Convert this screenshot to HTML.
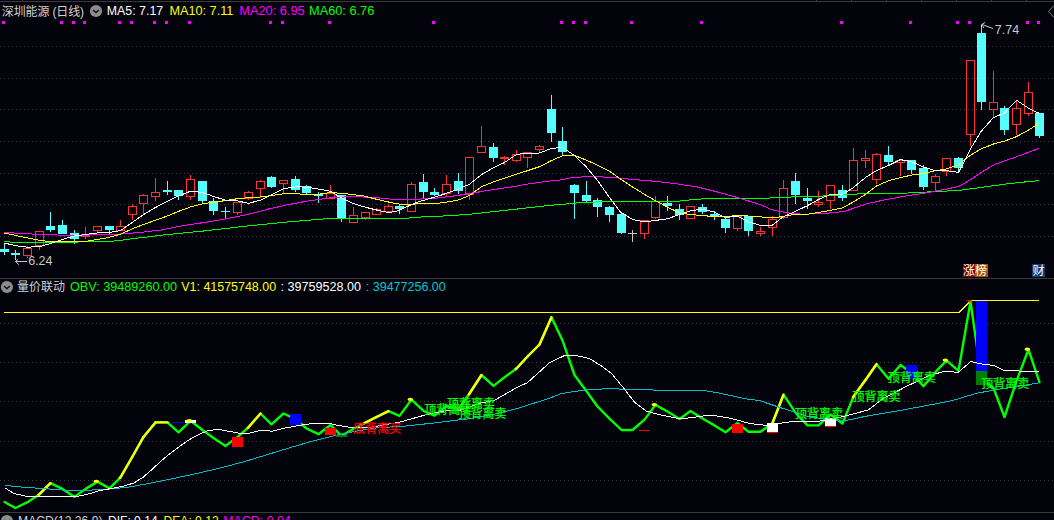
<!DOCTYPE html>
<html lang="zh-CN"><head><meta charset="utf-8"><title>深圳能源 (日线)</title>
<style>html,body{margin:0;padding:0;background:#03030b;overflow:hidden}svg{display:block}
text{font-family:"Liberation Sans","Noto Sans CJK SC",sans-serif;font-size:12px}
.lb{font-family:"Liberation Sans","Noto Sans CJK SC",sans-serif;font-size:12px}
.ce{shape-rendering:crispEdges}
</style></head><body>
<svg width="1054" height="520" viewBox="0 0 1054 520">
<rect width="1054" height="520" fill="#03030b"/>
<defs><pattern id="dots" x="0" y="0" width="4" height="1" patternUnits="userSpaceOnUse"><rect x="0" y="0" width="1" height="1" fill="#3c3c3c"/></pattern></defs>
<rect class="ce" x="0" y="46" width="1054" height="1" fill="url(#dots)"/>
<rect class="ce" x="0" y="78" width="1054" height="1" fill="url(#dots)"/>
<rect class="ce" x="0" y="109" width="1054" height="1" fill="url(#dots)"/>
<rect class="ce" x="0" y="141" width="1054" height="1" fill="url(#dots)"/>
<rect class="ce" x="0" y="173" width="1054" height="1" fill="url(#dots)"/>
<rect class="ce" x="0" y="204" width="1054" height="1" fill="url(#dots)"/>
<rect class="ce" x="0" y="236" width="1054" height="1" fill="url(#dots)"/>
<rect class="ce" x="0" y="323" width="1054" height="1" fill="url(#dots)"/>
<rect class="ce" x="0" y="362" width="1054" height="1" fill="url(#dots)"/>
<rect class="ce" x="0" y="401" width="1054" height="1" fill="url(#dots)"/>
<rect class="ce" x="0" y="441" width="1054" height="1" fill="url(#dots)"/>
<rect class="ce" x="0" y="480" width="1054" height="1" fill="url(#dots)"/>
<rect class="ce" x="0" y="1" width="1054" height="1" fill="#3a3a3a"/>
<rect class="ce" x="0" y="278" width="1054" height="1" fill="#3a3a3a"/>
<rect class="ce" x="0" y="512" width="1054" height="1" fill="#3a3a3a"/>
<rect class="ce" x="22" y="0" width="1" height="1" fill="#3a3a3a"/>
<rect class="ce" x="816" y="0" width="1" height="1" fill="#3a3a3a"/>
<rect class="ce" x="851" y="0" width="1" height="1" fill="#3a3a3a"/>
<rect class="ce" x="886" y="0" width="1" height="1" fill="#3a3a3a"/>
<rect class="ce" x="921" y="0" width="1" height="1" fill="#3a3a3a"/>
<rect class="ce" x="956" y="0" width="1" height="1" fill="#3a3a3a"/>
<rect class="ce" x="991" y="0" width="1" height="1" fill="#3a3a3a"/>
<rect class="ce" x="1026" y="0" width="1" height="1" fill="#3a3a3a"/>
<rect class="ce" x="2" y="21" width="3" height="3" fill="#ff00ff"/>
<rect class="ce" x="60" y="21" width="3" height="3" fill="#ff00ff"/>
<rect class="ce" x="72" y="21" width="3" height="3" fill="#ff00ff"/>
<rect class="ce" x="83" y="21" width="3" height="3" fill="#ff00ff"/>
<rect class="ce" x="118" y="21" width="3" height="3" fill="#ff00ff"/>
<rect class="ce" x="130" y="21" width="3" height="3" fill="#ff00ff"/>
<rect class="ce" x="153" y="21" width="3" height="3" fill="#ff00ff"/>
<rect class="ce" x="165" y="21" width="3" height="3" fill="#ff00ff"/>
<rect class="ce" x="188" y="21" width="3" height="3" fill="#ff00ff"/>
<rect class="ce" x="269" y="21" width="3" height="3" fill="#ff00ff"/>
<rect class="ce" x="281" y="21" width="3" height="3" fill="#ff00ff"/>
<rect class="ce" x="328" y="21" width="3" height="3" fill="#ff00ff"/>
<rect class="ce" x="432" y="21" width="3" height="3" fill="#ff00ff"/>
<rect class="ce" x="560" y="21" width="3" height="3" fill="#ff00ff"/>
<rect class="ce" x="572" y="21" width="3" height="3" fill="#ff00ff"/>
<rect class="ce" x="584" y="21" width="3" height="3" fill="#ff00ff"/>
<rect class="ce" x="630" y="21" width="3" height="3" fill="#ff00ff"/>
<rect class="ce" x="700" y="21" width="3" height="3" fill="#ff00ff"/>
<rect class="ce" x="840" y="21" width="3" height="3" fill="#ff00ff"/>
<rect class="ce" x="909" y="21" width="3" height="3" fill="#ff00ff"/>
<rect class="ce" x="956" y="21" width="3" height="3" fill="#ff00ff"/>
<rect class="ce" x="968" y="21" width="3" height="3" fill="#ff00ff"/>
<rect class="ce" x="1026" y="21" width="3" height="3" fill="#ff00ff"/>
<rect class="ce" x="1037" y="21" width="3" height="3" fill="#ff00ff"/>
<g class="ce">
<rect x="4" y="244" width="1" height="11" fill="#54ffff"/>
<rect x="0" y="249" width="9" height="3" fill="#54ffff"/>
<rect x="15" y="250" width="1" height="10" fill="#54ffff"/>
<rect x="11" y="253" width="9" height="2" fill="#54ffff"/>
<rect x="27" y="246" width="1" height="2" fill="#ff3232"/>
<rect x="27" y="256" width="1" height="2" fill="#ff3232"/>
<rect x="23.5" y="248.5" width="8" height="7" fill="none" stroke="#ff3232" stroke-width="1"/>
<rect x="39" y="246" width="1" height="4" fill="#ff3232"/>
<rect x="35.5" y="231.5" width="8" height="14" fill="none" stroke="#ff3232" stroke-width="1"/>
<rect x="50" y="212" width="1" height="20" fill="#54ffff"/>
<rect x="46" y="226" width="9" height="4" fill="#54ffff"/>
<rect x="62" y="220" width="1" height="14" fill="#54ffff"/>
<rect x="58" y="225" width="9" height="9" fill="#54ffff"/>
<rect x="74" y="230" width="1" height="14" fill="#54ffff"/>
<rect x="70" y="233" width="9" height="6" fill="#54ffff"/>
<rect x="85" y="227" width="1" height="7" fill="#ff3232"/>
<rect x="85" y="237" width="1" height="2" fill="#ff3232"/>
<rect x="81.5" y="234.5" width="8" height="2" fill="none" stroke="#ff3232" stroke-width="1"/>
<rect x="97" y="231" width="1" height="2" fill="#ff3232"/>
<rect x="93.5" y="226.5" width="8" height="4" fill="none" stroke="#ff3232" stroke-width="1"/>
<rect x="109" y="226" width="1" height="8" fill="#54ffff"/>
<rect x="105" y="226" width="9" height="4" fill="#54ffff"/>
<rect x="120" y="220" width="1" height="6" fill="#ff3232"/>
<rect x="116.5" y="226.5" width="8" height="4" fill="none" stroke="#ff3232" stroke-width="1"/>
<rect x="132" y="204" width="1" height="2" fill="#ff3232"/>
<rect x="132" y="215" width="1" height="5" fill="#ff3232"/>
<rect x="128.5" y="206.5" width="8" height="8" fill="none" stroke="#ff3232" stroke-width="1"/>
<rect x="143" y="194" width="1" height="1" fill="#ff3232"/>
<rect x="143" y="204" width="1" height="11" fill="#ff3232"/>
<rect x="139.5" y="195.5" width="8" height="8" fill="none" stroke="#ff3232" stroke-width="1"/>
<rect x="155" y="178" width="1" height="14" fill="#ff3232"/>
<rect x="155" y="197" width="1" height="4" fill="#ff3232"/>
<rect x="151.5" y="192.5" width="8" height="4" fill="none" stroke="#ff3232" stroke-width="1"/>
<rect x="167" y="181" width="1" height="14" fill="#54ffff"/>
<rect x="163" y="190" width="9" height="2" fill="#54ffff"/>
<rect x="178" y="190" width="1" height="10" fill="#54ffff"/>
<rect x="174" y="190" width="9" height="6" fill="#54ffff"/>
<rect x="190" y="175" width="1" height="4" fill="#ff3232"/>
<rect x="190" y="197" width="1" height="3" fill="#ff3232"/>
<rect x="186.5" y="179.5" width="8" height="17" fill="none" stroke="#ff3232" stroke-width="1"/>
<rect x="202" y="181" width="1" height="22" fill="#54ffff"/>
<rect x="198" y="181" width="9" height="20" fill="#54ffff"/>
<rect x="213" y="198" width="1" height="17" fill="#54ffff"/>
<rect x="209" y="201" width="9" height="10" fill="#54ffff"/>
<rect x="225" y="207" width="1" height="12" fill="#54ffff"/>
<rect x="221" y="211" width="9" height="1" fill="#54ffff"/>
<rect x="237" y="213" width="1" height="2" fill="#ff3232"/>
<rect x="233.5" y="202.5" width="8" height="10" fill="none" stroke="#ff3232" stroke-width="1"/>
<rect x="248" y="191" width="1" height="1" fill="#ff3232"/>
<rect x="248" y="199" width="1" height="1" fill="#ff3232"/>
<rect x="244.5" y="192.5" width="8" height="6" fill="none" stroke="#ff3232" stroke-width="1"/>
<rect x="260" y="180" width="1" height="1" fill="#ff3232"/>
<rect x="260" y="189" width="1" height="9" fill="#ff3232"/>
<rect x="256.5" y="181.5" width="8" height="7" fill="none" stroke="#ff3232" stroke-width="1"/>
<rect x="271" y="176" width="1" height="12" fill="#54ffff"/>
<rect x="267" y="177" width="9" height="10" fill="#54ffff"/>
<rect x="283" y="184" width="1" height="10" fill="#ff3232"/>
<rect x="279.5" y="180.5" width="8" height="3" fill="none" stroke="#ff3232" stroke-width="1"/>
<rect x="295" y="176" width="1" height="16" fill="#54ffff"/>
<rect x="291" y="179" width="9" height="11" fill="#54ffff"/>
<rect x="306" y="185" width="1" height="10" fill="#54ffff"/>
<rect x="302" y="186" width="9" height="7" fill="#54ffff"/>
<rect x="318" y="192" width="1" height="11" fill="#54ffff"/>
<rect x="314" y="194" width="9" height="2" fill="#54ffff"/>
<rect x="330" y="185" width="1" height="8" fill="#ff3232"/>
<rect x="326.5" y="193.5" width="8" height="5" fill="none" stroke="#ff3232" stroke-width="1"/>
<rect x="341" y="195" width="1" height="27" fill="#54ffff"/>
<rect x="337" y="195" width="9" height="23" fill="#54ffff"/>
<rect x="353" y="207" width="1" height="8" fill="#ff3232"/>
<rect x="349.5" y="215.5" width="8" height="7" fill="none" stroke="#ff3232" stroke-width="1"/>
<rect x="365" y="218" width="1" height="2" fill="#ff3232"/>
<rect x="361.5" y="212.5" width="8" height="5" fill="none" stroke="#ff3232" stroke-width="1"/>
<rect x="376" y="208" width="1" height="1" fill="#ff3232"/>
<rect x="372.5" y="209.5" width="8" height="5" fill="none" stroke="#ff3232" stroke-width="1"/>
<rect x="388" y="204" width="1" height="2" fill="#ff3232"/>
<rect x="384.5" y="206.5" width="8" height="5" fill="none" stroke="#ff3232" stroke-width="1"/>
<rect x="399" y="204" width="1" height="10" fill="#54ffff"/>
<rect x="395" y="206" width="9" height="3" fill="#54ffff"/>
<rect x="411" y="182" width="1" height="2" fill="#ff3232"/>
<rect x="407.5" y="184.5" width="8" height="27" fill="none" stroke="#ff3232" stroke-width="1"/>
<rect x="423" y="174" width="1" height="24" fill="#54ffff"/>
<rect x="419" y="182" width="9" height="10" fill="#54ffff"/>
<rect x="434" y="188" width="1" height="8" fill="#54ffff"/>
<rect x="430" y="192" width="9" height="3" fill="#54ffff"/>
<rect x="446" y="175" width="1" height="9" fill="#ff3232"/>
<rect x="446" y="194" width="1" height="3" fill="#ff3232"/>
<rect x="442.5" y="184.5" width="8" height="9" fill="none" stroke="#ff3232" stroke-width="1"/>
<rect x="458" y="173" width="1" height="21" fill="#54ffff"/>
<rect x="454" y="181" width="9" height="10" fill="#54ffff"/>
<rect x="469" y="195" width="1" height="5" fill="#ff3232"/>
<rect x="465.5" y="157.5" width="8" height="37" fill="none" stroke="#ff3232" stroke-width="1"/>
<rect x="481" y="126" width="1" height="20" fill="#ff3232"/>
<rect x="477.5" y="146.5" width="8" height="6" fill="none" stroke="#ff3232" stroke-width="1"/>
<rect x="493" y="143" width="1" height="19" fill="#54ffff"/>
<rect x="489" y="147" width="9" height="11" fill="#54ffff"/>
<rect x="504" y="156" width="1" height="1" fill="#ff3232"/>
<rect x="504" y="159" width="1" height="6" fill="#ff3232"/>
<rect x="500" y="157" width="9" height="2" fill="#ff3232"/>
<rect x="516" y="150" width="1" height="4" fill="#ff3232"/>
<rect x="516" y="161" width="1" height="1" fill="#ff3232"/>
<rect x="512.5" y="154.5" width="8" height="6" fill="none" stroke="#ff3232" stroke-width="1"/>
<rect x="527" y="158" width="1" height="10" fill="#ff3232"/>
<rect x="523.5" y="152.5" width="8" height="5" fill="none" stroke="#ff3232" stroke-width="1"/>
<rect x="539" y="145" width="1" height="1" fill="#ff3232"/>
<rect x="539" y="150" width="1" height="3" fill="#ff3232"/>
<rect x="535.5" y="146.5" width="8" height="3" fill="none" stroke="#ff3232" stroke-width="1"/>
<rect x="551" y="95" width="1" height="47" fill="#54ffff"/>
<rect x="547" y="109" width="9" height="24" fill="#54ffff"/>
<rect x="562" y="127" width="1" height="28" fill="#54ffff"/>
<rect x="558" y="141" width="9" height="11" fill="#54ffff"/>
<rect x="574" y="184" width="1" height="35" fill="#54ffff"/>
<rect x="570" y="185" width="9" height="8" fill="#54ffff"/>
<rect x="586" y="181" width="1" height="21" fill="#54ffff"/>
<rect x="582" y="195" width="9" height="6" fill="#54ffff"/>
<rect x="597" y="198" width="1" height="19" fill="#54ffff"/>
<rect x="593" y="200" width="9" height="7" fill="#54ffff"/>
<rect x="609" y="206" width="1" height="16" fill="#54ffff"/>
<rect x="605" y="207" width="9" height="8" fill="#54ffff"/>
<rect x="621" y="212" width="1" height="22" fill="#54ffff"/>
<rect x="617" y="214" width="9" height="19" fill="#54ffff"/>
<rect x="632" y="230" width="1" height="12" fill="#c8c8c8"/>
<rect x="628" y="233" width="9" height="1" fill="#c8c8c8"/>
<rect x="644" y="234" width="1" height="5" fill="#ff3232"/>
<rect x="640.5" y="220.5" width="8" height="13" fill="none" stroke="#ff3232" stroke-width="1"/>
<rect x="655" y="196" width="1" height="5" fill="#ff3232"/>
<rect x="655" y="218" width="1" height="1" fill="#ff3232"/>
<rect x="651.5" y="201.5" width="8" height="16" fill="none" stroke="#ff3232" stroke-width="1"/>
<rect x="667" y="196" width="1" height="15" fill="#54ffff"/>
<rect x="663" y="203" width="9" height="3" fill="#54ffff"/>
<rect x="679" y="204" width="1" height="16" fill="#54ffff"/>
<rect x="675" y="209" width="9" height="6" fill="#54ffff"/>
<rect x="686.5" y="206.5" width="8" height="12" fill="none" stroke="#ff3232" stroke-width="1"/>
<rect x="702" y="204" width="1" height="10" fill="#54ffff"/>
<rect x="698" y="207" width="9" height="5" fill="#54ffff"/>
<rect x="714" y="211" width="1" height="9" fill="#54ffff"/>
<rect x="710" y="214" width="9" height="3" fill="#54ffff"/>
<rect x="725" y="216" width="1" height="17" fill="#54ffff"/>
<rect x="721" y="219" width="9" height="9" fill="#54ffff"/>
<rect x="737" y="229" width="1" height="2" fill="#ff3232"/>
<rect x="733.5" y="216.5" width="8" height="12" fill="none" stroke="#ff3232" stroke-width="1"/>
<rect x="748" y="216" width="1" height="20" fill="#54ffff"/>
<rect x="744" y="216" width="9" height="15" fill="#54ffff"/>
<rect x="760" y="227" width="1" height="4" fill="#ff3232"/>
<rect x="760" y="234" width="1" height="2" fill="#ff3232"/>
<rect x="756.5" y="231.5" width="8" height="2" fill="none" stroke="#ff3232" stroke-width="1"/>
<rect x="772" y="216" width="1" height="3" fill="#ff3232"/>
<rect x="772" y="228" width="1" height="8" fill="#ff3232"/>
<rect x="768.5" y="219.5" width="8" height="8" fill="none" stroke="#ff3232" stroke-width="1"/>
<rect x="783" y="180" width="1" height="8" fill="#ff3232"/>
<rect x="783" y="218" width="1" height="1" fill="#ff3232"/>
<rect x="779.5" y="188.5" width="8" height="29" fill="none" stroke="#ff3232" stroke-width="1"/>
<rect x="795" y="173" width="1" height="31" fill="#54ffff"/>
<rect x="791" y="181" width="9" height="14" fill="#54ffff"/>
<rect x="807" y="188" width="1" height="21" fill="#54ffff"/>
<rect x="803" y="198" width="9" height="3" fill="#54ffff"/>
<rect x="818" y="191" width="1" height="11" fill="#ff3232"/>
<rect x="818" y="205" width="1" height="2" fill="#ff3232"/>
<rect x="814.5" y="202.5" width="8" height="2" fill="none" stroke="#ff3232" stroke-width="1"/>
<rect x="830" y="201" width="1" height="8" fill="#ff3232"/>
<rect x="826.5" y="185.5" width="8" height="15" fill="none" stroke="#ff3232" stroke-width="1"/>
<rect x="842" y="185" width="1" height="16" fill="#54ffff"/>
<rect x="838" y="190" width="9" height="8" fill="#54ffff"/>
<rect x="853" y="148" width="1" height="12" fill="#ff3232"/>
<rect x="849.5" y="160.5" width="8" height="30" fill="none" stroke="#ff3232" stroke-width="1"/>
<rect x="865" y="150" width="1" height="8" fill="#ff3232"/>
<rect x="865" y="161" width="1" height="7" fill="#ff3232"/>
<rect x="861.5" y="158.5" width="8" height="2" fill="none" stroke="#ff3232" stroke-width="1"/>
<rect x="876" y="153" width="1" height="1" fill="#ff3232"/>
<rect x="876" y="180" width="1" height="4" fill="#ff3232"/>
<rect x="872.5" y="154.5" width="8" height="25" fill="none" stroke="#ff3232" stroke-width="1"/>
<rect x="888" y="146" width="1" height="20" fill="#54ffff"/>
<rect x="884" y="155" width="9" height="7" fill="#54ffff"/>
<rect x="900" y="163" width="1" height="13" fill="#ff3232"/>
<rect x="896.5" y="160.5" width="8" height="2" fill="none" stroke="#ff3232" stroke-width="1"/>
<rect x="911" y="160" width="1" height="14" fill="#54ffff"/>
<rect x="907" y="160" width="9" height="10" fill="#54ffff"/>
<rect x="923" y="165" width="1" height="25" fill="#54ffff"/>
<rect x="919" y="168" width="9" height="19" fill="#54ffff"/>
<rect x="935" y="174" width="1" height="2" fill="#ff3232"/>
<rect x="935" y="183" width="1" height="8" fill="#ff3232"/>
<rect x="931.5" y="176.5" width="8" height="6" fill="none" stroke="#ff3232" stroke-width="1"/>
<rect x="946" y="172" width="1" height="4" fill="#ff3232"/>
<rect x="942.5" y="158.5" width="8" height="13" fill="none" stroke="#ff3232" stroke-width="1"/>
<rect x="958" y="157" width="1" height="15" fill="#54ffff"/>
<rect x="954" y="158" width="9" height="10" fill="#54ffff"/>
<rect x="970" y="135" width="1" height="11" fill="#ff3232"/>
<rect x="966.5" y="60.5" width="8" height="74" fill="none" stroke="#ff3232" stroke-width="1"/>
<rect x="981" y="25" width="1" height="85" fill="#54ffff"/>
<rect x="977" y="33" width="9" height="69" fill="#54ffff"/>
<rect x="993" y="71" width="1" height="31" fill="#ff3232"/>
<rect x="993" y="110" width="1" height="8" fill="#ff3232"/>
<rect x="989.5" y="102.5" width="8" height="7" fill="none" stroke="#ff3232" stroke-width="1"/>
<rect x="1004" y="106" width="1" height="29" fill="#54ffff"/>
<rect x="1000" y="108" width="9" height="22" fill="#54ffff"/>
<rect x="1016" y="100" width="1" height="8" fill="#ff3232"/>
<rect x="1016" y="125" width="1" height="10" fill="#ff3232"/>
<rect x="1012.5" y="108.5" width="8" height="16" fill="none" stroke="#ff3232" stroke-width="1"/>
<rect x="1028" y="82" width="1" height="10" fill="#ff3232"/>
<rect x="1028" y="114" width="1" height="2" fill="#ff3232"/>
<rect x="1024.5" y="92.5" width="8" height="21" fill="none" stroke="#ff3232" stroke-width="1"/>
<rect x="1039" y="113" width="1" height="25" fill="#54ffff"/>
<rect x="1035" y="113" width="9" height="23" fill="#54ffff"/>
</g>
<polyline class="ce" fill="none" stroke="#00ff00" stroke-width="1"  points="4.2,241.9 42.3,242.6 84.6,241.9 110.0,241.5 120.0,240.4 132.0,238.8 162.3,235.1 204.6,230.9 246.9,226.0 289.2,221.8 331.6,218.3 345.0,218.5 404.0,218.5 417.0,217.2 440.0,216.2 457.0,215.2 470.0,214.2 488.7,212.1 520.4,208.7 550.0,205.3 560.0,204.6 581.2,202.5 602.3,201.8 644.6,201.8 676.4,201.4 697.5,199.1 729.2,198.2 760.0,198.6 781.2,197.3 823.5,196.0 865.8,193.5 908.1,193.0 939.8,191.3 958.3,190.5 981.4,187.4 1004.5,184.2 1028.2,181.6 1039.2,180.6"/>
<polyline class="ce" fill="none" stroke="#ff00ff" stroke-width="1"  points="4.2,232.4 21.2,233.5 42.3,234.5 63.5,235.2 84.6,235.2 105.8,234.5 120.0,234.0 141.2,232.4 162.3,229.8 183.5,225.6 204.6,222.4 225.8,218.8 246.9,214.6 268.1,209.1 289.2,204.4 310.4,200.6 331.6,197.7 351.2,196.6 372.3,197.3 393.5,199.4 414.6,199.4 435.8,198.1 456.9,195.6 469.6,193.5 488.7,190.3 509.8,187.2 531.0,183.5 550.0,181.0 560.0,180.0 572.7,177.5 591.7,176.4 612.9,177.5 634.0,179.6 655.2,181.3 676.4,183.8 697.5,187.0 718.7,192.3 739.8,198.2 761.0,205.0 772.7,210.0 787.5,212.9 802.3,214.2 823.5,213.6 844.6,211.4 865.8,204.0 886.9,199.4 908.1,195.6 929.2,192.4 946.7,189.0 958.3,186.6 970.4,179.8 981.4,172.3 993.5,165.1 1004.5,160.9 1016.5,156.7 1028.2,152.4 1039.2,148.2"/>
<polyline class="ce" fill="none" stroke="#ffff00" stroke-width="1"  points="4.2,233.0 21.2,236.6 42.3,240.9 63.5,241.9 84.6,241.5 105.8,238.1 120.6,234.2 132.3,228.8 143.5,224.5 155.3,220.3 167.4,216.0 178.4,211.4 190.4,207.0 202.5,203.8 213.5,202.3 225.4,200.6 237.4,198.7 248.4,197.7 260.3,197.0 271.7,195.5 283.5,193.8 295.6,193.4 306.6,194.9 318.4,194.3 330.5,192.5 347.3,193.9 363.2,195.9 373.8,198.6 393.7,203.2 404.4,204.8 416.3,203.9 438.9,203.2 449.5,201.6 458.8,199.9 470.0,195.2 481.5,186.7 493.3,182.0 504.5,178.2 516.6,174.2 527.4,170.7 539.4,166.7 551.4,160.6 562.4,155.8 574.4,155.3 586.4,160.2 597.7,165.2 609.5,171.2 620.7,179.2 632.6,187.0 644.6,194.4 655.6,200.8 667.5,207.1 679.5,213.0 690.5,214.5 702.8,215.6 714.4,216.6 725.4,216.6 737.3,215.6 748.3,216.0 760.5,216.8 772.2,218.0 783.3,216.3 795.3,214.2 807.4,214.2 818.6,212.5 830.4,210.4 842.5,207.9 853.5,201.9 865.4,194.5 876.4,186.1 888.4,180.8 900.3,177.6 911.7,175.1 923.3,173.4 935.2,170.8 946.6,168.9 958.3,165.0 970.4,155.2 981.4,148.8 993.5,144.0 1004.5,141.2 1016.5,136.6 1028.2,130.2 1039.2,123.4"/>
<polyline class="ce" fill="none" stroke="#ffffff" stroke-width="1"  points="4.2,243.0 15.9,245.7 27.5,247.2 39.6,246.6 50.3,243.6 62.4,239.4 74.5,236.0 85.5,234.5 97.3,233.0 109.4,232.4 120.6,230.5 132.3,222.4 143.5,214.6 155.3,207.6 167.4,201.3 178.4,196.0 190.4,191.3 202.5,192.4 213.5,196.4 225.4,200.2 237.4,200.8 248.4,203.4 260.3,200.2 271.7,194.9 283.5,188.6 295.6,186.9 306.6,187.1 318.4,189.0 330.5,191.3 341.6,198.1 353.3,203.6 365.3,207.2 376.5,210.0 388.6,212.5 396.4,211.4 404.4,207.9 416.3,202.5 429.6,198.6 442.9,194.6 456.2,189.9 469.6,184.2 481.5,174.6 493.3,167.9 504.5,162.5 516.6,154.4 527.4,153.0 539.4,153.0 551.4,148.5 562.4,147.4 574.4,155.5 586.4,167.0 597.7,180.7 609.5,197.6 620.7,212.4 632.6,219.4 644.6,222.0 655.6,220.4 667.5,218.8 679.5,214.5 690.5,210.7 702.8,209.2 714.4,212.0 725.4,217.7 737.3,216.0 748.3,222.0 760.5,225.3 772.2,225.3 783.3,216.7 795.3,211.4 807.4,205.7 818.6,199.4 830.4,194.5 842.5,194.5 853.5,187.5 865.4,177.6 876.4,170.6 888.4,165.5 900.3,159.6 911.7,161.7 923.3,167.0 935.2,170.8 946.6,170.6 958.6,172.4 970.4,149.0 981.4,131.0 993.5,117.5 1004.5,113.0 1016.5,100.2 1028.2,108.0 1039.2,113.4"/>
<path d="M27 261.5H15.5M18 259.5L15.5 261.5L19 264.8" fill="none" stroke="#c8c8c8" stroke-width="1"/>
<text x="28.2" y="265.2" fill="#c8c8c8" style="font-size:12.5px">6.24</text>
<path d="M993 28.5L982 24.5M985 22.5L981.5 24.5L984 28" fill="none" stroke="#c8c8c8" stroke-width="1"/>
<text x="994.8" y="34.2" fill="#c8c8c8" style="font-size:12.5px">7.74</text>
<rect class="ce" x="963" y="264" width="12" height="13" fill="#800000"/><rect class="ce" x="975" y="264" width="13" height="13" fill="#a85400"/>
<text class="lb" x="963" y="275" fill="#ffffff" style="font-weight:400">涨榜</text>
<rect class="ce" x="1032" y="264" width="13" height="13" fill="#103c70"/>
<text class="lb" x="1032.5" y="275" fill="#ffffff" style="font-weight:400">财</text>
<path d="M1054 5.5L1048.5 11.5L1054 17.5" fill="none" stroke="#808080" stroke-width="1"/>
<text x="1.8" y="15.5" textLength="82.2" lengthAdjust="spacing" fill="#d2d2d2">深圳能源 (日线)</text>
<circle cx="96.0" cy="11.0" r="6.1" fill="#8c8c8c"/><path d="M93.0 10.0l3 2.6l3 -2.6" fill="none" stroke="#0c0c10" stroke-width="1.3"/>
<text x="106.8" y="15.4" textLength="56.4" lengthAdjust="spacingAndGlyphs" fill="#ffffff" style="font-size:12.5px">MA5: 7.17</text>
<text x="169.5" y="15.4" textLength="63.8" lengthAdjust="spacingAndGlyphs" fill="#ffff00" style="font-size:12.5px">MA10: 7.11</text>
<text x="239.3" y="15.4" textLength="65.3" lengthAdjust="spacingAndGlyphs" fill="#ff00ff" style="font-size:12.5px">MA20: 6.95</text>
<text x="309.0" y="15.4" textLength="65.3" lengthAdjust="spacingAndGlyphs" fill="#00ff00" style="font-size:12.5px">MA60: 6.76</text>
<circle cx="6.9" cy="287.0" r="6.1" fill="#8c8c8c"/><path d="M3.9 286.0l3 2.6l3 -2.6" fill="none" stroke="#0c0c10" stroke-width="1.3"/>
<text x="17" y="291.0" fill="#d2d2d2">量价联动</text>
<text x="70.0" y="291.0" textLength="107.0" lengthAdjust="spacingAndGlyphs" fill="#00ff00" style="font-size:12.5px">OBV: 39489260.00</text>
<text x="181.3" y="291.0" textLength="94.8" lengthAdjust="spacingAndGlyphs" fill="#ffff00" style="font-size:12.5px">V1: 41575748.00</text>
<text x="280.5" y="291.0" textLength="80.4" lengthAdjust="spacingAndGlyphs" fill="#ffffff" style="font-size:12.5px">: 39759528.00</text>
<text x="365.8" y="291.0" textLength="80.0" lengthAdjust="spacingAndGlyphs" fill="#00c8d2" style="font-size:12.5px">: 39477256.00</text>
<circle cx="6.9" cy="521.0" r="6.1" fill="#8c8c8c"/><path d="M3.9 520.0l3 2.6l3 -2.6" fill="none" stroke="#0c0c10" stroke-width="1.3"/>
<text x="18.0" y="525.0" textLength="84.5" lengthAdjust="spacingAndGlyphs" fill="#d2d2d2" style="font-size:12.5px">MACD(12,26,9)</text>
<text x="108.0" y="525.0" textLength="49.6" lengthAdjust="spacingAndGlyphs" fill="#ffffff" style="font-size:12.5px">DIF: 0.14</text>
<text x="163.6" y="525.0" textLength="55.0" lengthAdjust="spacingAndGlyphs" fill="#ffff00" style="font-size:12.5px">DEA: 0.12</text>
<text x="223.3" y="525.0" textLength="67.5" lengthAdjust="spacingAndGlyphs" fill="#ff00ff" style="font-size:12.5px">MACD: 0.04</text>
<polyline class="ce" fill="none" stroke="#ffff00" stroke-width="1"  points="4.0,312.5 959.0,312.5 971.0,300.5 1039.0,300.5"/>
<polyline class="" fill="none" stroke="#00ff00" stroke-width="2.4" stroke-linejoin="round" stroke-linecap="round" points="4.5,502.0 15.5,508.0 27.5,502.2 39.5,494.2 50.5,483.2 62.5,488.9 74.5,496.9 85.5,488.9 97.5,481.6 109.5,488.4 120.5,477.3 132.5,456.5 143.5,436.9 155.5,422.4 167.5,422.4 178.5,432.3 190.5,420.8 202.5,430.0 213.5,438.0 225.5,446.0 237.5,437.0 248.5,427.3 260.5,413.5 271.5,424.3 283.5,413.5 295.5,419.2 306.5,428.5 318.5,434.2 330.5,425.0 341.5,435.9 353.5,428.8 365.5,422.6 376.5,417.0 388.5,411.1 399.5,415.9 411.5,399.6 423.5,410.8 434.5,415.6 446.5,406.0 458.5,409.0 469.5,393.5 481.5,375.0 493.5,385.9 504.5,377.3 516.5,368.5 527.5,356.5 539.5,344.5 551.5,317.3 562.5,340.4 574.5,375.0 586.5,391.2 597.5,406.5 609.5,418.7 621.5,430.0 632.5,430.0 644.5,419.6 655.5,404.9 667.5,411.5 679.5,419.0 690.5,411.0 702.5,418.5 714.5,425.4 725.5,432.3 737.5,423.0 748.5,431.8 760.5,431.8 772.5,423.0 783.5,394.7 795.5,412.7 807.5,425.4 818.5,425.4 830.5,414.5 842.5,423.5 853.5,396.5 865.5,380.0 876.5,364.3 888.5,378.8 900.5,365.0 911.5,373.0 923.5,386.3 935.5,372.0 946.5,360.4 958.5,370.8 970.5,301.5 981.5,378.8 993.5,388.0 1004.5,417.0 1016.5,381.0 1028.5,349.5 1039.5,382.3"/>
<polyline class="" fill="none" stroke="#ffff00" stroke-width="2.4" stroke-linecap="round" points="39.5,494.2 50.5,483.2"/>
<polyline class="" fill="none" stroke="#ffff00" stroke-width="2.4" stroke-linecap="round" points="120.5,477.3 132.5,456.5"/>
<polyline class="" fill="none" stroke="#ffff00" stroke-width="2.4" stroke-linecap="round" points="132.5,456.5 143.5,436.9"/>
<polyline class="" fill="none" stroke="#ffff00" stroke-width="2.4" stroke-linecap="round" points="143.5,436.9 155.5,422.4"/>
<polyline class="" fill="none" stroke="#ffff00" stroke-width="2.4" stroke-linecap="round" points="155.5,422.4 167.5,422.4"/>
<polyline class="" fill="none" stroke="#ffff00" stroke-width="2.4" stroke-linecap="round" points="248.5,427.3 260.5,413.5"/>
<polyline class="" fill="none" stroke="#ffff00" stroke-width="2.4" stroke-linecap="round" points="365.5,422.6 376.5,417.0"/>
<polyline class="" fill="none" stroke="#ffff00" stroke-width="2.4" stroke-linecap="round" points="376.5,417.0 388.5,411.1"/>
<polyline class="" fill="none" stroke="#ffff00" stroke-width="2.4" stroke-linecap="round" points="469.5,393.5 481.5,375.0"/>
<polyline class="" fill="none" stroke="#ffff00" stroke-width="2.4" stroke-linecap="round" points="516.5,368.5 527.5,356.5"/>
<polyline class="" fill="none" stroke="#ffff00" stroke-width="2.4" stroke-linecap="round" points="527.5,356.5 539.5,344.5"/>
<polyline class="" fill="none" stroke="#ffff00" stroke-width="2.4" stroke-linecap="round" points="539.5,344.5 551.5,317.3"/>
<polyline class="" fill="none" stroke="#ffff00" stroke-width="2.4" stroke-linecap="round" points="772.5,423.0 783.5,394.7"/>
<polyline class="" fill="none" stroke="#ffff00" stroke-width="2.4" stroke-linecap="round" points="853.5,396.5 865.5,380.0"/>
<polyline class="" fill="none" stroke="#ffff00" stroke-width="2.4" stroke-linecap="round" points="865.5,380.0 876.5,364.3"/>
<rect class="ce" x="976" y="301" width="11" height="70" fill="#0000ff"/><rect class="ce" x="976" y="371" width="11" height="14" fill="#008000"/>
<polyline class="ce" fill="none" stroke="#00bccb" stroke-width="1"  points="4.6,485.4 23.0,487.2 46.2,488.8 69.2,490.5 92.3,490.0 113.0,488.8 129.2,487.0 150.0,483.3 173.0,478.6 196.2,473.6 219.2,468.3 243.0,462.0 266.0,455.0 289.0,448.0 312.0,441.2 335.0,435.4 358.0,430.8 381.0,427.3 400.0,426.7 434.6,422.9 469.2,418.7 492.3,414.6 520.0,407.7 550.0,398.0 561.5,393.5 584.6,390.0 607.7,388.7 640.0,389.6 661.9,390.3 705.0,390.6 719.7,393.2 746.2,398.9 759.8,400.7 773.0,405.2 786.4,409.6 806.3,416.2 823.6,418.9 839.5,420.6 847.5,420.2 860.0,417.5 870.0,415.5 902.9,410.0 929.4,405.0 952.5,400.6 975.5,393.5 998.6,389.2 1021.7,385.8 1039.0,382.8"/>
<polyline class="ce" fill="none" stroke="#ffffff" stroke-width="1"  points="4.6,487.7 13.8,493.5 27.7,496.5 46.2,496.5 76.2,496.5 87.7,494.2 99.2,490.7 113.0,488.2 124.6,485.8 133.8,483.0 143.0,477.3 152.3,469.2 161.5,460.5 170.8,453.0 180.0,446.0 189.2,439.7 198.5,434.6 207.7,430.7 210.0,430.2 219.3,429.5 229.9,431.5 239.2,433.2 248.5,433.5 259.1,430.6 272.4,431.1 284.4,428.2 295.0,426.2 303.0,424.9 313.6,423.3 329.5,423.3 337.5,425.3 350.0,427.3 370.0,427.3 393.0,423.4 400.0,422.1 426.5,414.6 446.0,410.6 460.0,410.2 480.8,403.0 494.6,400.2 520.0,385.8 527.0,383.0 550.0,362.3 564.0,355.8 575.4,355.4 589.2,358.4 603.0,367.0 611.5,373.5 623.0,387.3 634.6,402.3 646.2,411.0 657.7,414.3 680.8,419.0 710.8,415.0 729.2,418.0 750.0,423.5 766.2,425.4 789.2,422.0 819.2,421.2 840.0,417.3 868.2,410.0 883.2,398.5 906.3,386.5 929.4,375.4 945.5,371.2 958.2,372.4 970.9,361.5 980.2,363.8 994.0,365.5 1003.2,370.0 1021.7,371.2 1039.0,371.5"/>
<rect class="ce" x="232" y="437" width="11" height="10" fill="#ff0000"/>
<rect class="ce" x="290" y="414" width="11" height="11" fill="#0000ff"/>
<rect class="ce" x="325" y="428" width="11" height="7" fill="#ff0000"/>
<rect class="ce" x="336" y="435" width="11" height="2" fill="#008000"/>
<rect class="ce" x="732" y="424" width="11" height="9" fill="#ff0000"/>
<rect class="ce" x="767" y="423" width="11" height="9" fill="#ffffff"/>
<rect class="ce" x="767" y="432" width="11" height="1" fill="#ff0000"/>
<rect class="ce" x="825" y="418" width="11" height="8" fill="#ffffff"/>
<rect class="ce" x="825" y="426" width="11" height="1" fill="#ff0000"/>
<rect class="ce" x="906" y="365" width="11" height="14" fill="#0000ff"/>
<rect class="ce" x="639" y="430" width="11" height="1" fill="#ff0000"/>
<rect class="ce" x="173" y="422" width="11" height="1" fill="#0000ff"/>
<rect class="ce" x="185" y="420" width="11" height="3" fill="#ffffff"/>
<polyline class="" fill="none" stroke="#ffff00" stroke-width="2.4"  points="37.8,495.3 39.5,494.2"/>
<ellipse cx="96.3" cy="481.3" rx="2.8" ry="1.6" fill="#ffff00"/>
<polyline class="" fill="none" stroke="#ffff00" stroke-width="2.4"  points="119.1,478.7 120.5,477.3"/>
<ellipse cx="189.3" cy="420.5" rx="2.8" ry="1.6" fill="#ffff00"/>
<polyline class="" fill="none" stroke="#ffff00" stroke-width="2.4"  points="247.0,428.6 248.5,427.3"/>
<polyline class="" fill="none" stroke="#ffff00" stroke-width="2.4"  points="363.7,423.5 365.5,422.6"/>
<ellipse cx="410.3" cy="399.3" rx="2.8" ry="1.6" fill="#ffff00"/>
<polyline class="" fill="none" stroke="#ffff00" stroke-width="2.4"  points="468.3,395.1 469.5,393.5"/>
<polyline class="" fill="none" stroke="#ffff00" stroke-width="2.4"  points="514.9,369.7 516.5,368.5"/>
<ellipse cx="654.3" cy="404.6" rx="2.8" ry="1.6" fill="#ffff00"/>
<polyline class="" fill="none" stroke="#ffff00" stroke-width="2.4"  points="852.7,398.4 853.5,396.5"/>
<ellipse cx="945.3" cy="360.1" rx="2.8" ry="1.6" fill="#ffff00"/>
<ellipse cx="1027.3" cy="349.2" rx="2.8" ry="1.6" fill="#ffff00"/>
<path d="M966 300h6l-3 2.5z" fill="#ff0000"/>
<text class="lb" x="353.3" y="432.7" textLength="48" lengthAdjust="spacingAndGlyphs" fill="#ff0000" stroke="#ff0000" stroke-width="0.25" style="font-size:12.2px">底背离买</text>
<text class="lb" x="424.3" y="414.2" textLength="48" lengthAdjust="spacingAndGlyphs" fill="#00ff00" stroke="#00ff00" stroke-width="0.25" style="font-size:12.2px">顶背离卖</text>
<text class="lb" x="447.0" y="407.8" textLength="48" lengthAdjust="spacingAndGlyphs" fill="#00ff00" stroke="#00ff00" stroke-width="0.25" style="font-size:12.2px">顶背离卖</text>
<text class="lb" x="458.4" y="418.2" textLength="48" lengthAdjust="spacingAndGlyphs" fill="#00ff00" stroke="#00ff00" stroke-width="0.25" style="font-size:12.2px">顶背离卖</text>
<text class="lb" x="794.9" y="417.7" textLength="48" lengthAdjust="spacingAndGlyphs" fill="#00ff00" stroke="#00ff00" stroke-width="0.25" style="font-size:12.2px">顶背离卖</text>
<text class="lb" x="852.4" y="400.5" textLength="48" lengthAdjust="spacingAndGlyphs" fill="#00ff00" stroke="#00ff00" stroke-width="0.25" style="font-size:12.2px">顶背离卖</text>
<text class="lb" x="887.8" y="382.0" textLength="48" lengthAdjust="spacingAndGlyphs" fill="#00ff00" stroke="#00ff00" stroke-width="0.25" style="font-size:12.2px">顶背离卖</text>
<text class="lb" x="981.2" y="387.5" textLength="48" lengthAdjust="spacingAndGlyphs" fill="#00ff00" stroke="#00ff00" stroke-width="0.25" style="font-size:12.2px">顶背离卖</text>
</svg></body></html>
